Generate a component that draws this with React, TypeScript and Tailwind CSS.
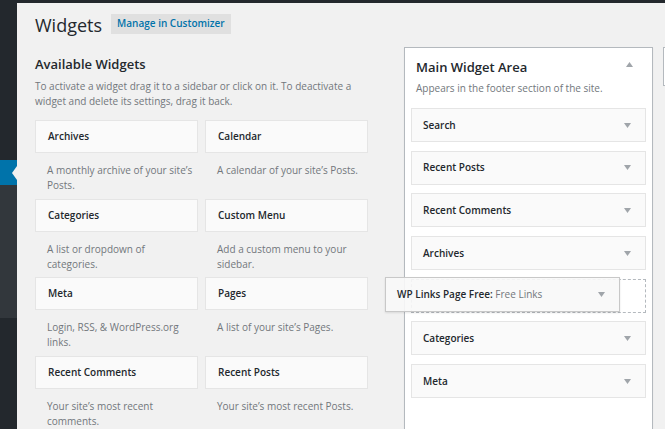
import React from "react";

const available = [
    { title: "Archives", desc: "A monthly archive of your site’s Posts." },
    { title: "Calendar", desc: "A calendar of your site’s Posts." },
    { title: "Categories", desc: "A list or dropdown of categories." },
    { title: "Custom Menu", desc: "Add a custom menu to your sidebar." },
    { title: "Meta", desc: "Login, RSS, & WordPress.org links." },
    { title: "Pages", desc: "A list of your site’s Pages." },
    { title: "Recent Comments", desc: "Your site’s most recent comments." },
    { title: "Recent Posts", desc: "Your site’s most recent Posts." },
];

const sidebarTop = ["Search", "Recent Posts", "Recent Comments", "Archives"];
const sidebarBottom = ["Categories", "Meta"];

function Caret({ up = false }: { up?: boolean }) {
    return (
        <svg width="7" height="5" viewBox="0 0 7 5" className="shrink-0">
            <path d={up ? "M0 5 L3.5 0 L7 5 Z" : "M0 0 L7 0 L3.5 5 Z"} fill="#a0a5aa" />
        </svg>
    );
}

function SidebarWidget({ title }: { title: string }) {
    return (
        <div className="flex h-[34px] items-center justify-between border border-[#e5e5e5] bg-[#fafafa] pr-[14px] pl-[11px] text-[10px] font-semibold text-[#23282d]">
            <span>{title}</span>
            <Caret />
        </div>
    );
}

export default function App() {
    return (
        <div
            className="flex h-[429px] w-[665px] flex-col overflow-hidden bg-[#f1f1f1]"
            style={{ fontFamily: '"Open Sans", "Liberation Sans", sans-serif' }}
        >
            <div className="h-[3px] shrink-0 bg-[#23282d]" />
            <div className="flex flex-1">
                {/* admin menu edge */}
                <div className="flex w-[17px] shrink-0 flex-col bg-[#23282d]">
                    <div className="h-[157px]" />
                    <div className="flex h-[25px] items-center justify-end bg-[#0073aa]">
                        <svg width="5" height="14" viewBox="0 0 5 14">
                            <path d="M5 0 L0 7 L5 14 Z" fill="#f1f1f1" />
                        </svg>
                    </div>
                    <div className="h-[133px] bg-[#32373c]" />
                </div>

                <main className="flex-1 pl-[18px] text-[#23282d]">
                    <div className="mt-[10px] flex h-[21px] items-center gap-[9px]">
                        <h1 className="pt-[2px] text-[18px] leading-none font-normal">Widgets</h1>
                        <span className="flex h-[20px] items-center bg-[#e0e0e0] px-[6px] text-[10px] font-semibold text-[#0073aa]">
                            Manage in Customizer
                        </span>
                    </div>

                    <div className="mt-[13px] flex">
                        <section className="w-[333px] shrink-0 pt-[8px]">
                            <h2 className="text-[13px] leading-[18px] font-semibold">Available Widgets</h2>
                            <p className="mt-[6px] text-[10px] leading-[15px] text-[#72777c]">
                                To activate a widget drag it to a sidebar or click on it. To deactivate a
                                widget and delete its settings, drag it back.
                            </p>
                            <div className="mt-[11px] grid grid-cols-2 gap-x-[7px]">
                                {available.map((w) => (
                                    <div key={w.title} className="h-[78.7px]">
                                        <div className="flex h-[33px] items-center border border-[#e5e5e5] bg-[#fafafa] px-[12px] text-[10px] font-semibold">
                                            {w.title}
                                        </div>
                                        <p className="pt-[10px] pr-[2px] pl-[12px] text-[10px] leading-[15px] text-[#72777c]">
                                            {w.desc}
                                        </p>
                                    </div>
                                ))}
                            </div>
                        </section>

                        <section className="relative ml-[36px] w-[249px] shrink-0 border border-[#b4b9be] bg-white px-[6px] pb-[8px] shadow-[0_1px_1px_rgba(0,0,0,0.08)]">
                            <div className="flex items-start justify-between pt-[10px] pr-[13px] pl-[5px]">
                                <h3 className="text-[13px] leading-[18px] font-semibold">Main Widget Area</h3>
                                <span className="pt-[4px]">
                                    <Caret up />
                                </span>
                            </div>
                            <p className="mt-[5px] pl-[5px] text-[10px] leading-[15px] text-[#72777c]">
                                Appears in the footer section of the site.
                            </p>
                            <div className="mt-[12px] flex flex-col gap-[8.7px]">
                                {sidebarTop.map((t) => (
                                    <SidebarWidget key={t} title={t} />
                                ))}
                                <div className="h-[34px] border border-dashed border-[#b4b9be]" />
                                {sidebarBottom.map((t) => (
                                    <SidebarWidget key={t} title={t} />
                                ))}
                            </div>

                            {/* widget being dragged */}
                            <div className="absolute top-[229px] left-[-20px] flex h-[35px] w-[235px] items-center justify-between border border-[#c8c8c8] bg-[#f8f8f8]/90 pr-[14px] pl-[11px] text-[10px] shadow-[0_1px_2px_rgba(0,0,0,0.1)]">
                                <span>
                                    <span className="font-semibold">WP Links Page Free:</span>{" "}
                                    <span className="text-[#72777c]">Free Links</span>
                                </span>
                                <Caret />
                            </div>
                        </section>

                        <div className="ml-[10px] h-[39px] w-[10px] shrink-0 border border-[#b4b9be] bg-white" />
                    </div>
                </main>
            </div>
        </div>
    );
}
